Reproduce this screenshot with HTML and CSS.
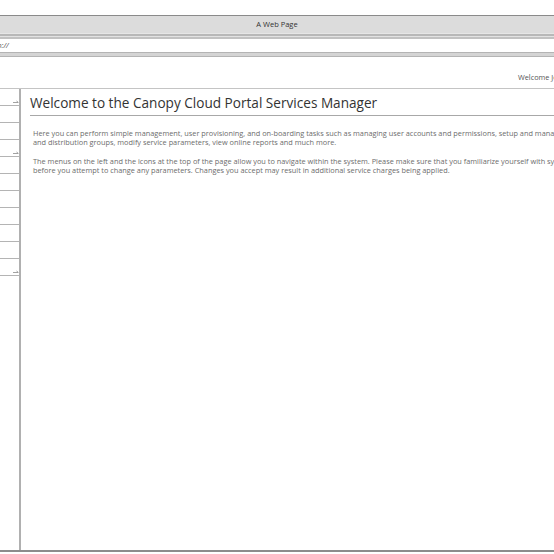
FILE: index.html
```html
<!DOCTYPE html>
<html>
<head>
<meta charset="utf-8">
<title>A Web Page</title>
<link rel="stylesheet" href="styles.css">
</head>
<body>
<div class="window">
  <div class="top-space"></div>
  <div class="titlebar">A Web Page</div>
  <div class="titlebar-edge"></div>
  <div class="address-edge"></div>
  <div class="address"><span class="url">http://</span></div>
  <div class="address-bottom"></div>
  <div class="page">
    <div class="header"><span class="welcome">Welcome John</span></div>
    <div class="main">
      <nav class="nav">
        <div class="nav-item"><svg class="arrow" width="6" height="4" viewBox="0 0 6 4"><path d="M0 2.5H5M3.5 1L5.5 2.5" stroke="#8a8a8a" stroke-width="0.8" fill="none"/></svg></div>
        <div class="nav-item"></div>
        <div class="nav-item"></div>
        <div class="nav-item"><svg class="arrow" width="6" height="4" viewBox="0 0 6 4"><path d="M0 2.5H5M3.5 1L5.5 2.5" stroke="#8a8a8a" stroke-width="0.8" fill="none"/></svg></div>
        <div class="nav-item"></div>
        <div class="nav-item"></div>
        <div class="nav-item"></div>
        <div class="nav-item"></div>
        <div class="nav-item"></div>
        <div class="nav-item"></div>
        <div class="nav-item"><svg class="arrow" width="6" height="4" viewBox="0 0 6 4"><path d="M0 2.5H5M3.5 1L5.5 2.5" stroke="#8a8a8a" stroke-width="0.8" fill="none"/></svg></div>
      </nav>
      <section class="content">
        <h1 class="heading">Welcome to the Canopy Cloud Portal Services Manager</h1>
        <p class="text">Here you can perform simple management, user provisioning, and on-boarding tasks such as managing user accounts and permissions, setup and management of security<br>and distribution groups, modify service parameters, view online reports and much more.</p>
        <p class="text">The menus on the left and the icons at the top of the page allow you to navigate within the system. Please make sure that you familiarize yourself with system functions<br>before you attempt to change any parameters. Changes you accept may result in additional service charges being applied.</p>
      </section>
    </div>
  </div>
</div>
</body>
</html>
```

FILE: styles.css
```css
html, body {
  margin: 0;
  padding: 0;
  background: #ffffff;
  overflow: hidden;
}
.window {
  width: 554px;
  height: 554px;
  overflow: hidden;
  display: flex;
  flex-direction: column;
  font-family: "Open Sans", "Liberation Sans", sans-serif;
}
.top-space {
  height: 15px;
  flex: none;
}
.titlebar {
  flex: none;
  height: 17px;
  border-top: 1px solid #8a8a8a;
  background: #dcdcdc;
  color: #333;
  font-size: 7.5px;
  line-height: 16px;
  text-align: center;
}
.titlebar-edge {
  flex: none;
  height: 2px;
  border-top: 1px solid #e6e6e6;
  background: #b8b8b8;
}
.address-edge {
  flex: none;
  height: 2px;
  border-top: 1px solid #e2e2e2;
  background: #c2c2c2;
}
.address {
  flex: none;
  height: 13px;
  background: #fff;
  font-size: 7.5px;
  line-height: 13px;
  color: #555;
  font-style: italic;
  white-space: nowrap;
}
.url {
  margin-left: -12px;
}
.address-bottom {
  flex: none;
  height: 3px;
  border-top: 1px solid #b4b4b4;
  border-bottom: 1px solid #b4b4b4;
  background: #d4d4d4;
}
.page {
  flex: 1;
  display: flex;
  flex-direction: column;
  min-height: 0;
}
.header {
  flex: none;
  height: 32px;
  border-bottom: 1px solid #c4c4c4;
  white-space: nowrap;
  display: flex;
  align-items: center;
  padding-left: 518px;
  padding-top: 9px;
  box-sizing: border-box;
  font-size: 7.3px;
  color: #555;
}
.welcome {
  flex: none;
}
.main {
  flex: 1;
  display: flex;
  min-height: 0;
  border-bottom: 2px solid #8c8c8c;
  margin-bottom: 2px;
}
.nav {
  flex: none;
  width: 19px;
  border-right: 2px solid #b0b0b0;
  display: flex;
  flex-direction: column;
}
.nav-item {
  height: 16px;
  border-bottom: 1px solid #b4b4b4;
  position: relative;
}
.arrow {
  position: absolute;
  right: 0;
  bottom: 1px;
}
.content {
  flex: 1;
  min-width: 0;
  padding-left: 9px;
  white-space: nowrap;
  overflow: hidden;
}
.heading {
  margin: 4px 0 0 0;
  padding: 0 0 2px 0;
  font-weight: normal;
  font-size: 13.6px;
  line-height: 20px;
  color: #333;
  border-bottom: 1px solid #a8a8a8;
}
.text {
  margin: 13px 0 0 3px;
  font-size: 7.35px;
  line-height: 9px;
  color: #6c6c6c;
}
.text + .text {
  margin-top: 10px;
}
```
